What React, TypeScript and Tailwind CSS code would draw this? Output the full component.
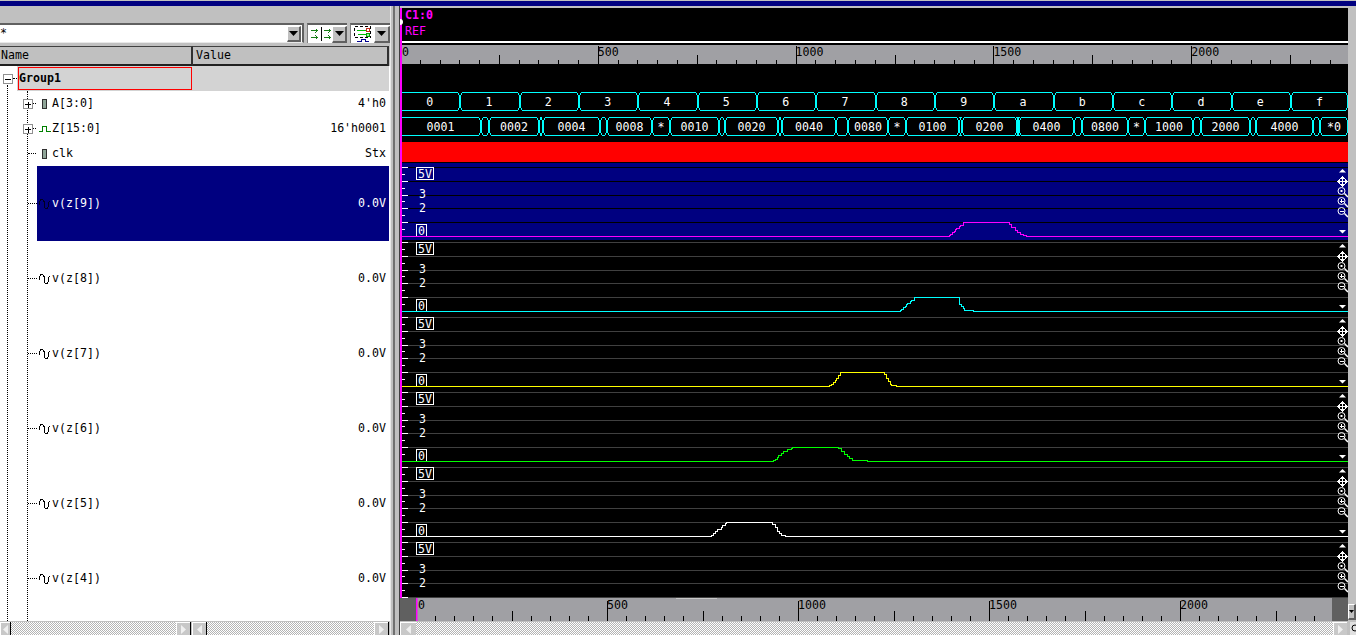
import React from 'react';

const BUS_A = '0123456789abcdef'.split('');

const BUS_Z: [number, number, string][] = [
  [390, 481, '0001'], [481, 489, ''], [489, 539, '0002'], [539, 543, ''], [543, 600, '0004'],
  [600, 607, ''], [607, 652, '0008'], [652, 670, '*'], [670, 719, '0010'], [719, 725, ''],
  [725, 778, '0020'], [778, 782, ''], [782, 836, '0040'], [836, 848, ''], [848, 888, '0080'],
  [888, 906, '*'], [906, 959, '0100'], [959, 962, ''], [962, 1017, '0200'], [1017, 1019, ''],
  [1019, 1074, '0400'], [1074, 1082, ''], [1082, 1128, '0800'], [1128, 1145, '*'], [1145, 1193, '1000'],
  [1193, 1201, ''], [1201, 1250, '2000'], [1250, 1256, ''], [1256, 1313, '4000'], [1313, 1320, ''],
  [1320, 1348, '*0'],
];

type Track = {
  name: string;
  color: string;
  base: number;
  steps: [number, number][];
  selected?: boolean;
};

// at x the trace jumps to y
const TRACKS: Track[] = [
  {
    name: 'v(z[9])', color: '#ff00ff', base: 236, selected: true,
    steps: [[949, 235], [950, 234], [952, 232], [954, 231], [955, 229], [956, 228], [959, 226], [960, 225], [963, 222], [1009, 224], [1011, 227], [1015, 230], [1017, 232], [1020, 234], [1023, 235], [1026, 236]],
  },
  {
    name: 'v(z[8])', color: '#00ffff', base: 311,
    steps: [[900, 310], [901, 309], [903, 307], [905, 306], [906, 304], [907, 303], [910, 301], [911, 300], [914, 297], [959, 304], [961, 306], [963, 308], [964, 310], [973, 311]],
  },
  {
    name: 'v(z[7])', color: '#ffff00', base: 386,
    steps: [[829, 385], [831, 384], [833, 382], [835, 380], [836, 378], [838, 375], [840, 372], [884, 374], [886, 378], [888, 381], [890, 384], [891, 385], [896, 386]],
  },
  {
    name: 'v(z[6])', color: '#00ff00', base: 461,
    steps: [[773, 460], [775, 459], [777, 457], [778, 455], [781, 453], [783, 451], [787, 449], [791, 448], [792, 447], [838, 448], [841, 451], [844, 454], [847, 456], [849, 458], [852, 460], [867, 461]],
  },
  {
    name: 'v(z[5])', color: '#ffffff', base: 536,
    steps: [[711, 535], [713, 533], [715, 531], [717, 529], [721, 527], [722, 525], [725, 523], [726, 522], [772, 524], [775, 527], [777, 531], [779, 533], [781, 535], [785, 536]],
  },
  { name: 'v(z[4])', color: '#ffffff', base: 0, steps: [] },
];

const tracePoints = (base: number, steps: [number, number][]) => {
  let y = base;
  const pts = [`400,${y + 0.5}`];
  for (const [sx, sy] of steps) {
    pts.push(`${sx},${y + 0.5}`, `${sx},${sy + 0.5}`);
    y = sy;
  }
  pts.push(`1348,${y + 0.5}`);
  return pts.join(' ');
};

const cellPath = (x0: number, x1: number, top: number, bot: number) =>
  `M${x0 + 2.5} ${top}H${x1 - 2.5}L${x1 - 0.5} ${top + 3}V${bot - 3}L${x1 - 2.5} ${bot}H${x0 + 2.5}L${x0 + 0.5} ${bot - 3}V${top + 3}Z`;

const TriDown = () => (
  <svg width="9" height="5" viewBox="0 0 9 5">
    <path d="M0 0H9L4.5 5Z" fill="#000" />
  </svg>
);

const ArrowButton = ({ className }: { className: string }) => (
  <div className={`flex items-center justify-center bg-[#c0c0c0] border-t border-l border-white border-r-2 border-b-2 border-r-[#606060] border-b-[#606060] ${className}`}>
    <TriDown />
  </div>
);

const ScrollBtn = ({ dir, className = '' }: { dir: 'l' | 'r'; className?: string }) => (
  <div className={`flex items-center justify-center h-full bg-[#c8c8c8] border-t border-l border-white ${className}`}>
    <svg width="5" height="9" viewBox="0 0 5 9">
      <path d={dir === 'l' ? 'M5 0V9L0 4.5Z' : 'M0 0V9L5 4.5Z'} fill="#f0f0f0" />
    </svg>
  </div>
);

const Dither = ({ className = '' }: { className?: string }) => (
  <div className={`h-full bg-[repeating-conic-gradient(#b4b4b4_0_25%,#ffffff_0_50%)] bg-[length:2px_2px] ${className}`} />
);

const SignalIcon = () => <div className="w-[5px] h-[10px] bg-[#8fa598] border border-[#303030] ml-[6px] mr-[5px]" />;

const AnalogIcon = ({ dark }: { dark?: boolean }) => (
  <svg width="13" height="14" viewBox="0 0 13 14" className="shrink-0">
    <path
      d="M0.5 7.5V4.5L2 2.5H3.5L5 4.5V9.5L6.5 11.5H8L9.5 9.5V5.5L11 4"
      fill="none"
      stroke={dark ? '#000020' : '#000'}
      shapeRendering="crispEdges"
    />
  </svg>
);

const Expander = ({ minus }: { minus?: boolean }) => (
  <svg width="10" height="10" viewBox="0 0 10 10" className="absolute top-1/2 -translate-y-1/2 bg-white">
    <rect x="0.5" y="0.5" width="9" height="9" fill="#fff" stroke="#909090" />
    <path d={minus ? 'M2 5.5H8' : 'M2 5.5H8M5 2.5V8.5'} stroke="#000" shapeRendering="crispEdges" />
  </svg>
);

const Dots = ({ className }: { className: string }) => <div className={`border-t border-dotted border-black ${className}`} />;

const TreeRow = ({ name, value, icon, expand }: { name: string; value: string; icon: React.ReactNode; expand?: boolean }) => (
  <div className="relative flex items-center h-[25px] pl-[28px] pr-[3px]">
    {expand && <div className="absolute left-[23px] top-0 h-full flex items-center"><Expander /></div>}
    {expand ? <Dots className="w-[3px] ml-[5px] shrink-0" /> : <Dots className="w-[8px] shrink-0" />}
    <div className="w-[16px] flex items-center">{icon}</div>
    <span className="text-black">{name}</span>
    <span className="ml-auto text-black">{value}</span>
  </div>
);

const AnalogRow = ({ name, selected }: { name: string; selected?: boolean }) => (
  <div className="relative flex items-center h-[75px] pl-[28px]">
    <Dots className="w-[9px] shrink-0" />
    <div className={`flex items-center flex-1 h-full pl-[2px] pr-[3px] ${selected ? 'bg-[#000080] text-white' : 'text-black'}`}>
      <AnalogIcon dark={selected} />
      <span>{name}</span>
      <span className="ml-auto">0.0V</span>
    </div>
  </div>
);

const Magnifier = ({ y, mark }: { y: number; mark: 'dot' | 'plus' | 'minus' }) => (
  <g fill="none" stroke="#fff">
    <circle cx="1341.5" cy={y} r="3.5" />
    {mark === 'dot' && <rect x="1340.5" y={y - 1} width="2" height="2" fill="#fff" stroke="none" />}
    {mark === 'plus' && <path d={`M1339.5 ${y + 0.5}H1343.5M1341.5 ${y - 2}V${y + 2}`} shapeRendering="crispEdges" />}
    {mark === 'minus' && <path d={`M1339.5 ${y + 0.5}H1343.5`} shapeRendering="crispEdges" />}
    <path d={`M1344.5 ${y + 2.5}L1348 ${y + 6}`} strokeWidth="1.5" />
  </g>
);

const ZoomIcons = ({ top }: { top: number }) => (
  <g>
    <path d={`M1342.5 ${top + 6}L1346 ${top + 9.5}H1339Z`} fill="#fff" />
    <path
      d={`M1338 ${top + 18.5}H1347M1342.5 ${top + 14}V${top + 23}M1340.5 ${top + 16}L1342.5 ${top + 14}L1344.5 ${top + 16}M1340.5 ${top + 21}L1342.5 ${top + 23}L1344.5 ${top + 21}M1340 ${top + 16.5}L1338 ${top + 18.5}L1340 ${top + 20.5}M1345 ${top + 16.5}L1347 ${top + 18.5}L1345 ${top + 20.5}`}
      fill="none"
      stroke="#fff"
      shapeRendering="crispEdges"
    />
    <Magnifier y={top + 28} mark="dot" />
    <Magnifier y={top + 38} mark="plus" />
    <Magnifier y={top + 48} mark="minus" />
    <path d={`M1339 ${top + 67}H1346L1342.5 ${top + 70.5}Z`} fill="#fff" />
  </g>
);

const AnalogTrack = ({ track, index }: { track: Track; index: number }) => {
  const top = 163 + index * 75;
  const gridColor = track.selected ? '#000000' : '#404040';
  return (
    <svg
      width="948"
      height="75"
      viewBox={`400 ${top} 948 75`}
      className="block shrink-0 overflow-visible"
    >
      {track.selected && <rect x="400" y={top} width="948" height="77" fill="#000080" />}
      {[4, 18, 32, 45, 59].map((o) => (
        <rect key={o} x="400" y={top + o} width="948" height="1" fill={gridColor} />
      ))}
      {[4, 18, 32, 45, 59].map((o) => (
        <rect key={o} x="401" y={top + o} width="7" height="1" fill="#fff" />
      ))}
      {[11, 25, 38, 52, 66].map((o) => (
        <rect key={o} x="401" y={top + o} width="4" height="1" fill="#fff" />
      ))}
      <rect x="416.5" y={top + 4.5} width="17" height="12" fill={track.selected ? '#000080' : '#000'} stroke="#fff" shapeRendering="crispEdges" />
      <text x="418" y={top + 15} className="fill-white">5V</text>
      <text x="419" y={top + 35} className="fill-white">3</text>
      <text x="419" y={top + 49} className="fill-white">2</text>
      {track.base > 0 && (
        <>
          <rect x="416.5" y={top + 61.5} width="10" height="12" fill={track.selected ? '#000080' : '#000'} stroke="#fff" shapeRendering="crispEdges" />
          <text x="418" y={top + 72} className="fill-white">0</text>
          <polyline points={tracePoints(track.base, track.steps)} fill="none" stroke={track.color} shapeRendering="crispEdges" />
        </>
      )}
      <ZoomIcons top={top} />
    </svg>
  );
};

const TopRuler = () => (
  <svg width="948" height="19" viewBox="400 45 948 19" className="block shrink-0">
    <rect x="400" y="45" width="948" height="19" fill="#a0a0a4" />
    {Array.from({ length: 48 }, (_, i) => {
      const x = Math.round(400 + i * 19.78);
      const h = i === 0 ? 0 : i % 10 === 0 ? 18 : i % 5 === 0 ? 9 : 4;
      return <rect key={i} x={x} y={64 - h} width="1" height={h} fill="#000" />;
    })}
    {[0, 500, 1000, 1500, 2000].map((v, i) => (
      <text key={v} x={i === 0 ? 402 : 400 + i * 197.8} y="56" className="fill-black">{v}</text>
    ))}
  </svg>
);

const BottomRuler = () => (
  <svg width="948" height="23" viewBox="400 598 948 23" className="block shrink-0">
    <rect x="400" y="598" width="948" height="23" fill="#a0a0a4" />
    <rect x="400" y="598" width="16" height="23" fill="#606060" />
    <rect x="1332" y="598" width="16" height="23" fill="#606060" />
    <rect x="676" y="598" width="41" height="1" fill="#c8c8c8" />
    {Array.from({ length: 48 }, (_, i) => {
      const x = Math.round(416 + i * 19.1);
      const h = i === 0 ? 0 : i % 10 === 0 ? 20 : i % 5 === 0 ? 10 : 5;
      return x < 1332 ? <rect key={i} x={x} y={621 - h} width="1" height={h} fill="#000" /> : null;
    })}
    {[0, 500, 1000, 1500, 2000].map((v, i) => (
      <text key={v} x={i === 0 ? 418 : 416 + i * 191} y="609" className="fill-black">{v}</text>
    ))}
    <rect x="416" y="598" width="1.5" height="23" fill="#ff00ff" />
  </svg>
);

const BusRows = () => (
  <svg width="948" height="99" viewBox="400 64 948 99" className="block shrink-0">
    <rect x="400" y="64" width="948" height="99" fill="#000" />
    {BUS_A.map((label, i) => {
      const x0 = i === 0 ? 390 : Math.round(400 + i * 59.33) + 1;
      const x1 = i === 15 ? 1348 : Math.round(400 + (i + 1) * 59.33) + 1;
      return (
        <g key={label}>
          <path d={cellPath(x0, x1, 92.5, 110.5)} fill="none" stroke="#00ffff" shapeRendering="crispEdges" />
          <text x={400 + (i + 0.5) * 59.33} y="106" textAnchor="middle" className="fill-white">{label}</text>
        </g>
      );
    })}
    {BUS_Z.map(([x0, x1, label]) => (
      <g key={x0}>
        <path d={cellPath(x0, x1, 117.5, 135.5)} fill="none" stroke="#00ffff" shapeRendering="crispEdges" />
        {label && (
          <text x={Math.max(x0, 400) / 2 + x1 / 2} y="131" textAnchor="middle" className="fill-white">{label}</text>
        )}
      </g>
    ))}
    <rect x="400" y="142" width="948" height="20" fill="#ff0000" />
  </svg>
);

const App: React.FC = () => {
  return (
    <div className="w-[1356px] h-[635px] overflow-hidden flex flex-col bg-[#c0c0c0] font-['DejaVu_Sans_Mono',monospace] text-[11.6px] leading-none">
      <div className="h-[6px] shrink-0 border-t border-[#c0c0c0] bg-[#000080]" />

      <div className="flex flex-1 min-h-0">
        {/* Signal list */}
        <div className="w-[390px] shrink-0 flex flex-col">
          <div className="h-[17px] shrink-0" />

          <div className="h-[20px] shrink-0 flex">
            <div className="w-[304px] h-full flex items-center bg-white border-t-2 border-t-[#606060] border-r-2 border-r-[#606060] border-b border-b-[#e8e8e8] relative">
              <span className="text-black">*</span>
              <ArrowButton className="absolute right-[1px] top-[1px] w-[14px] h-[16px]" />
            </div>
            <div className="ml-[3px] w-[40px] h-full flex items-center bg-white border-t-2 border-t-[#606060] border-l border-l-[#808080]">
              <svg width="24" height="16" viewBox="0 0 24 16" className="ml-[1px]">
                <path
                  d="M2 4.5H9M7 2.5L9 4.5L7 6.5M2 11.5H9M7 9.5L9 11.5L7 13.5M15 4.5H22M20 2.5L22 4.5L20 6.5M15 11.5H22M20 9.5L22 11.5L20 13.5"
                  fill="none"
                  stroke="#0f7a0f"
                  shapeRendering="crispEdges"
                />
                <path d="M12.5 1V15" stroke="#000" shapeRendering="crispEdges" />
              </svg>
              <ArrowButton className="ml-auto w-[15px] h-[17px]" />
            </div>
            <div className="ml-[3px] w-[40px] h-full flex items-center bg-white border-t-2 border-t-[#606060] border-l border-l-[#808080]">
              <svg width="22" height="18" viewBox="0 0 22 18" className="ml-[1px]">
                <rect x="2.5" y="1.5" width="16" height="11" fill="none" stroke="#000" strokeDasharray="3 2" shapeRendering="crispEdges" />
                <path d="M5 5.5H14M6 9.5H15" stroke="#00c000" shapeRendering="crispEdges" />
                <rect x="14" y="3.5" width="3" height="3" fill="#fff" stroke="#c03020" shapeRendering="crispEdges" />
                <rect x="14" y="8" width="3" height="3" fill="#a0f0a0" stroke="#00a000" shapeRendering="crispEdges" />
                <path d="M5 16.5H9V14.5H13V16.5H17" fill="none" stroke="#000090" shapeRendering="crispEdges" />
              </svg>
              <ArrowButton className="ml-auto w-[16px] h-[17px]" />
            </div>
          </div>

          <div className="h-[23px] shrink-0 flex pt-[3px] pr-[1px]">
            <div className="w-[193px] flex items-center pl-[1px] bg-[#c0c0c0] border-t border-t-[#404040] border-r-2 border-r-[#303030] border-b-2 border-b-[#202020] text-black">
              Name
            </div>
            <div className="flex-1 flex items-center pl-[3px] bg-[#c0c0c0] border-t border-t-[#404040] border-r-2 border-r-[#303030] border-b-2 border-b-[#202020] text-black">
              Value
            </div>
          </div>

          <div className="relative h-[555px] shrink-0 bg-white pr-[1px]">
            {/* tree lines */}
            <div className="absolute left-[7px] top-[19px] bottom-0 border-l border-dotted border-black" />
            <div className="absolute left-[27px] top-[25px] bottom-0 border-l border-dotted border-black" />

            <div className="relative flex items-center h-[25px]">
              <div className="absolute left-[3px] top-0 h-full flex items-center"><Expander minus /></div>
              <Dots className="w-[4px] ml-[13px] shrink-0" />
              <div className="flex-1 h-full bg-[#d3d3d3]">
                <div className="w-[174px] h-[23px] mt-[1px] ml-[1px] flex items-center border border-[#ff0000] font-bold text-black">
                  Group1
                </div>
              </div>
            </div>

            <TreeRow name="A[3:0]" value="4'h0" expand icon={<SignalIcon />} />
            <TreeRow
              name="Z[15:0]"
              value="16'h0001"
              expand
              icon={
                <svg width="13" height="8" viewBox="0 0 13 8" className="ml-[3px]">
                  <path d="M0 6.5H3V1.5H7V6.5H12" fill="none" stroke="#008000" shapeRendering="crispEdges" />
                </svg>
              }
            />
            <TreeRow name="clk" value="Stx" icon={<SignalIcon />} />
            {TRACKS.map((t) => (
              <AnalogRow key={t.name} name={t.name} selected={t.selected} />
            ))}
          </div>

          <div className="h-[1px] shrink-0" />
          <div className="flex h-[13px] shrink-0 gap-[1px]">
            <div className="w-[191px] flex items-center h-full">
              <ScrollBtn dir="l" className="w-[10px]" />
              <div className="w-[1px] h-full bg-black" />
              <Dither className="flex-1" />
              <ScrollBtn dir="r" className="w-[14px]" />
              <div className="w-[1px] h-full bg-black" />
            </div>
            <div className="w-[197px] flex items-center h-full">
              <ScrollBtn dir="l" className="w-[14px]" />
              <div className="w-[1px] h-full bg-black" />
              <Dither className="flex-1" />
              <ScrollBtn dir="r" className="w-[14px]" />
              <div className="w-[1px] h-full bg-black" />
            </div>
          </div>
        </div>

        {/* Splitter */}
        <div className="w-[10px] shrink-0 flex">
          <div className="w-[1px] bg-[#e8e8e8]" />
          <div className="w-[2px] bg-[#c0c0c0]" />
          <div className="w-[2px] bg-[#707070]" />
          <div className="w-[4px] bg-[#c0c0c0]" />
          <div className="w-[1px] bg-[#404040]" />
        </div>

        {/* Waveform area */}
        <div className="flex-1 min-w-0 flex flex-col">
          <div className="flex flex-1 min-h-0">
            <div className="relative w-[948px] shrink-0 flex flex-col pt-[2px]">
              <div className="relative h-[33px] shrink-0 bg-black pl-[5px] pt-[2px]">
                <div className="text-[#ff00ff] font-bold">C1:0</div>
                <div className="text-[#ff00ff] mt-[4px]">REF</div>
              </div>
              <div className="h-[2px] shrink-0 bg-white" />
              <div className="h-[2px] shrink-0 bg-black" />
              <TopRuler />
              <BusRows />
              <div className="h-[435px] shrink-0 overflow-hidden bg-black">
                {TRACKS.map((t, i) => (
                  <AnalogTrack key={t.name} track={t} index={i} />
                ))}
              </div>
              <BottomRuler />
              {/* cursor */}
              <div className="absolute left-0 top-[2px] w-[2px] h-[590px] bg-[#ff00ff]" />
              <div className="absolute left-0 top-[13px] w-[3px] h-[6px] rounded-r-full bg-white" />
            </div>
            <div className="flex-1 flex flex-col justify-end pb-[1px]">
              <ArrowButton className="w-[8px] h-[16px] overflow-hidden" />
            </div>
          </div>
          <div className="h-[1px] shrink-0" />
          <div className="flex h-[13px] shrink-0 items-center">
            <ScrollBtn dir="l" className="w-[16px]" />
            <Dither className="w-[917px]" />
            <ScrollBtn dir="r" className="w-[14px]" />
            <div className="w-[3px] h-full bg-[#c0c0c0]" />
            <svg width="6" height="13" viewBox="0 0 6 13">
              <rect width="6" height="13" fill="#e0e0e0" />
              <circle cx="5" cy="6" r="3" fill="none" stroke="#000" />
            </svg>
          </div>
        </div>
      </div>
    </div>
  );
};

export default App;
